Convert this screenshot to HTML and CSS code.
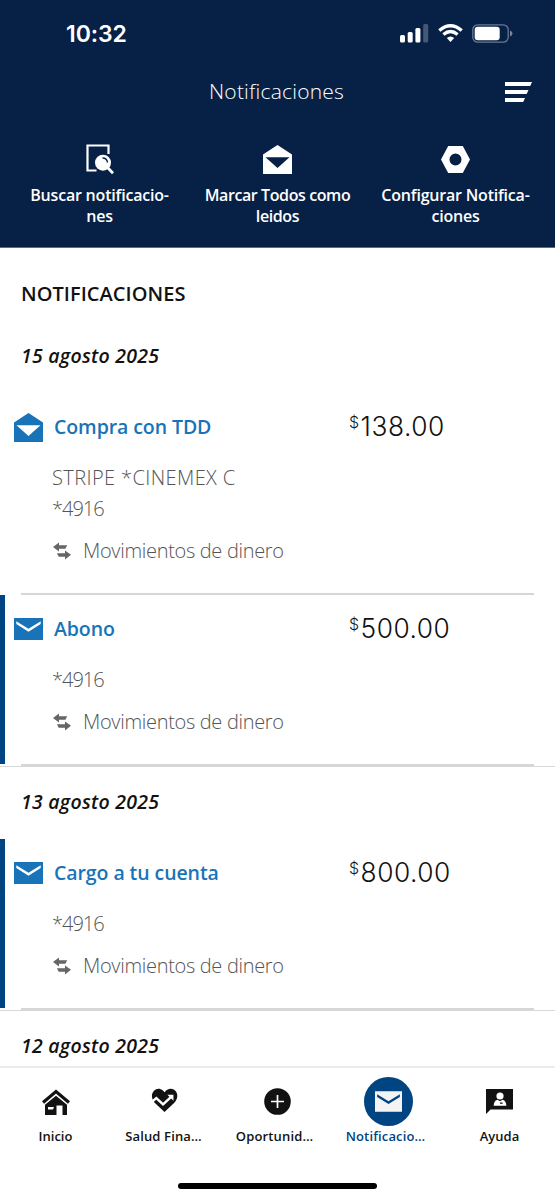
FILE: index.html
```html
<!DOCTYPE html>
<html lang="es">
<head>
<meta charset="utf-8">
<title>Notificaciones</title>
<link rel="stylesheet" href="styles.css">
</head>
<body>
<svg class="defs" width="0" height="0" aria-hidden="true">
  <symbol id="mail" viewBox="0 0 29 22"><path fill-rule="evenodd" d="M0 0H29V22H0ZM2.3 3.2V6.1L14.5 13.7 26.7 6.1V3.2L14.5 10.8Z"/></symbol>
  <symbol id="mail-open" viewBox="0 0 29 29"><path fill-rule="evenodd" d="M14.5 0 29 9.5V29H0V9.5ZM2.5 12.3 14.5 23 26.5 12.3Z"/></symbol>
  <symbol id="transfer" viewBox="0 0 18 18"><path d="M0 5 6 .5V3.2H14.2L12.4 6.8H6V9.500ZM18 12.800 12 8.500V11.200H3.900L5.700 14.800H12V17.500Z"/></symbol>
</svg>
<div class="screen">
  <header class="header">
    <div class="status">
      <span class="clock">10:32</span>
      <div class="status-icons">
        <svg width="29" height="19" viewBox="0 0 29 19" fill="#fff"><rect x="0" y="11" width="5" height="7.500" rx="1.500"/><rect x="7.700" y="8" width="5" height="10.500" rx="1.500"/><rect x="15.400" y="4" width="5" height="14.500" rx="1.500"/><rect x="23.200" y="0" width="5" height="18.500" rx="1.500" opacity=".25"/></svg>
        <svg width="25" height="18" viewBox="0 0 25 18" fill="none" stroke="#fff"><path stroke-width="3.300" d="M1.300 6.500Q12.500-3 23.700 6.500"/><path stroke-width="3.200" d="M5.400 10.500Q12.500 4.500 19.600 10.500"/><path fill="#fff" stroke="none" d="M8.800 14Q12.500 11 16.200 14L12.500 18Z"/></svg>
        <svg width="41" height="19" viewBox="0 0 41 19"><rect x=".8" y=".8" width="35.400" height="17.400" rx="5" fill="none" stroke="#fff" stroke-width="1.300" opacity=".4"/><rect x="2.700" y="2.700" width="25" height="13.600" rx="3" fill="#fff"/><path d="M38 6.500Q40.500 7.500 40.500 9.500T38 12.500Z" fill="#fff" opacity=".45"/></svg>
      </div>
    </div>
    <div class="titlebar">
      <h1 class="title">Notificaciones</h1>
      <svg class="menu" width="27" height="20" viewBox="0 0 27 20" fill="#fff"><path d="M0 0H27L25.200 4H0ZM0 8H23.500L21.700 12H0ZM0 16H20L18.200 20H0Z"/></svg>
    </div>
    <nav class="actions">
      <div class="action">
        <svg width="28" height="31" viewBox="0 0 28 31"><path d="M10.500 26.500H1.500V1.500H22.500V10" fill="none" stroke="#fff" stroke-width="2.200"/><circle cx="17" cy="18.700" r="8" fill="#fff"/><path d="M22 24 27 29.200" stroke="#fff" stroke-width="2.800"/><path d="M16.500 14Q21 14 21.500 18.500" fill="none" stroke="#072146" stroke-width="1.400"/></svg>
        <span>Buscar notificacio-<br>nes</span>
      </div>
      <div class="action tight">
        <svg width="29" height="31" fill="#fff"><use href="#mail-open" y="1" width="29" height="29"/></svg>
        <span>Marcar Todos como<br>leidos</span>
      </div>
      <div class="action">
        <svg width="29" height="31" viewBox="0 0 29 31"><path fill="#fff" fill-rule="evenodd" d="M7.200 2H21.800L29 15.500 21.800 29H7.200L0 15.500ZM14.500 9.500A6 6 0 1 0 14.500 21.500 6 6 0 1 0 14.500 9.500Z"/></svg>
        <span>Configurar Notifica-<br>ciones</span>
      </div>
    </nav>
  </header>

  <main class="list">
    <h2 class="heading">NOTIFICACIONES</h2>

    <h3 class="date">15 agosto 2025</h3>
    <article class="item">
      <div class="item-head">
        <svg class="item-icon" width="29" height="29"><use href="#mail-open"/></svg>
        <span class="item-title">Compra con TDD</span>
        <span class="amount"><span class="currency">$</span>138.00</span>
      </div>
      <div class="detail"><span class="merchant">STRIPE *CINEMEX C</span><br>*4916</div>
      <div class="category"><svg width="18" height="18"><use href="#transfer"/></svg><span>Movimientos de dinero</span></div>
    </article>
    <article class="item unread">
      <div class="item-head">
        <svg class="item-icon" width="29" height="22"><use href="#mail"/></svg>
        <span class="item-title">Abono</span>
        <span class="amount"><span class="currency">$</span>500.00</span>
      </div>
      <div class="detail">*4916</div>
      <div class="category"><svg width="18" height="18"><use href="#transfer"/></svg><span>Movimientos de dinero</span></div>
    </article>

    <h3 class="date">13 agosto 2025</h3>
    <article class="item unread">
      <div class="item-head">
        <svg class="item-icon" width="29" height="22"><use href="#mail"/></svg>
        <span class="item-title">Cargo a tu cuenta</span>
        <span class="amount"><span class="currency">$</span>800.00</span>
      </div>
      <div class="detail">*4916</div>
      <div class="category"><svg width="18" height="18"><use href="#transfer"/></svg><span>Movimientos de dinero</span></div>
    </article>

    <h3 class="date">12 agosto 2025</h3>
  </main>

  <footer class="footer">
    <nav class="tabs">
      <div class="tab">
        <div class="tab-icon"><svg width="28" height="26" viewBox="0 0 28 26"><path d="M1 13.500 14 2.500 27 13.500" fill="none" stroke="#121212" stroke-width="3.200"/><path fill="#121212" fill-rule="evenodd" d="M14 6.800 25 15.800V26H20.500V16.500H14.500V26H3V15.800ZM6 18V20.500H11L12 18Z"/></svg></div>
        <span>Inicio</span>
      </div>
      <div class="tab clipped">
        <div class="tab-icon heart"><svg width="27" height="25" viewBox="0 0 28 26"><path fill="#121212" d="M14 25 3.500 15C-3 7 4-1 10 1.200 12.500 2 14 4.500 14 4.500S16 1.500 19 1C25-.5 31 7 24.500 15Z"/><path d="M0 15.200 5.500 10.500 12.500 17 21.500 8.700" fill="none" stroke="#fff" stroke-width="2.600"/><path d="M17 7H23.300V13.300Z" fill="#fff"/></svg></div>
        <span>Salud Fina…</span>
      </div>
      <div class="tab clipped">
        <div class="tab-icon"><svg width="27" height="27" viewBox="0 0 27 27"><circle cx="13.500" cy="13.500" r="13.300" fill="#121212"/><path d="M13.500 7V20M7 13.500H20" stroke="#fff" stroke-width="1.700"/></svg></div>
        <span>Oportunid…</span>
      </div>
      <div class="tab clipped active">
        <div class="tab-icon"><svg width="27" height="21"><use href="#mail" width="27" height="21"/></svg></div>
        <span>Notificacio…</span>
      </div>
      <div class="tab">
        <div class="tab-icon"><svg width="27" height="25" viewBox="0 0 27 25"><path fill="#121212" d="M0 0H27V20.500H4.500L0 25Z"/><circle cx="14" cy="7" r="3.600" fill="#fff"/><path fill="#fff" d="M7.700 16.800C8 12.500 10 11 11.500 10.800L14 12.300 16.500 10.800C18.500 11 20.200 13 20.400 16.800Z"/><rect x="14" y="13.500" width="2.600" height="1.300" fill="#121212"/></svg></div>
        <span>Ayuda</span>
      </div>
    </nav>
    <div class="home-indicator"></div>
  </footer>
</div>
</body>
</html>
```

FILE: styles.css
```css
* { box-sizing: border-box; }
body { margin: 0; background: #fff; font-family: "Open Sans", "Noto Sans", sans-serif; color: #121212; }
svg { display: block; flex: none; }
.defs { position: absolute; }
.screen { width: 555px; height: 1200px; display: flex; flex-direction: column; overflow: hidden; }
h1, h2, h3 { margin: 0; }

.header { flex: none; height: 248px; background: #072146; color: #fff; border-bottom: 1px solid #5d6b84; }
.status { height: 66px; padding: 0 42px 0 66px; display: flex; align-items: center; justify-content: space-between; }
.clock { font: 600 23px/28px Inter, sans-serif; letter-spacing: -.1px; padding-top: 1px; }
.status-icons { display: flex; align-items: center; gap: 9px; }
.titlebar { height: 52px; padding: 0 23px 0 48px; display: grid; grid-template-columns: 1fr 27px; align-items: center; }
.title { font-size: 21px; line-height: 30px; font-weight: 300; letter-spacing: .2px; text-align: center; margin-top: -2px; }
.actions { display: grid; grid-template-columns: repeat(3, 178px); justify-content: center; padding-top: 26px; }
.action { display: flex; flex-direction: column; align-items: center; gap: 10px; font-size: 16px; line-height: 21px; font-weight: 600; letter-spacing: -.2px; text-align: center; white-space: nowrap; }
.tight { letter-spacing: -.4px; }

.list { flex: 1; min-height: 0; overflow: hidden; }
.heading { height: 72px; padding: 31px 21px 0; font-size: 20px; line-height: 30px; font-weight: 600; letter-spacing: .05px; }
.date { height: 72px; padding: 19px 21px 0; font-size: 19.5px; line-height: 32px; font-weight: 600; font-style: italic; letter-spacing: .25px; }
.heading + .date { height: 73px; padding-top: 20px; }
.item { position: relative; height: 202px; padding: 17px 21px 0 14px; }
.item::after { content: ""; position: absolute; left: 21px; right: 21px; bottom: 0; height: 2px; background: #d6d6d6; }
.unread { height: 172px; border-bottom: 1px solid #d8d8d8; }
.unread::before { content: ""; position: absolute; left: 0; top: 0; bottom: 2px; width: 5px; background: #004481; }
.item-head { display: grid; grid-template-columns: 29px 283px 1fr; column-gap: 11px; height: 34px; align-items: center; color: #1973b8; fill: #1973b8; }
.item-title { font-size: 19.5px; line-height: 30px; font-weight: 600; letter-spacing: -.08px; }
.amount { display: flex; align-items: flex-start; gap: 1px; margin: -1px 0 0 1px; font: 300 26.3px/34px Inter, sans-serif; letter-spacing: .5px; color: #121212; }
.currency { font-size: 16px; line-height: 25px; }
.detail { padding: 18px 0 0 38px; font-size: 20px; line-height: 31px; font-weight: 300; letter-spacing: -1px; color: #555; }
.merchant { letter-spacing: .4px; }
.category { display: flex; align-items: center; gap: 12px; padding: 11px 0 0 39px; font-size: 20px; line-height: 31px; font-weight: 300; letter-spacing: -.32px; color: #555; fill: #666; }

.footer { flex: none; height: 134px; border-top: 2px solid #ececec; background: #fff; }
.tabs { display: grid; grid-template-columns: repeat(5, 111px); height: 115px; padding-top: 9px; }
.tab { display: flex; flex-direction: column; align-items: center; gap: 1px; font-size: 13px; line-height: 19px; font-weight: 600; }
.clipped { letter-spacing: .15px; }
.clipped span { margin-right: 6px; }
.tab-icon { width: 49px; height: 49px; display: grid; place-items: center; }
.heart { margin-right: 4px; padding-bottom: 2px; }
.active { color: #004481; }
.active .tab-icon { border-radius: 50%; background: #004481; fill: #f4f4f4; }
.home-indicator { width: 199px; height: 6px; margin: 0 auto; border-radius: 3px; background: #000; }
```
